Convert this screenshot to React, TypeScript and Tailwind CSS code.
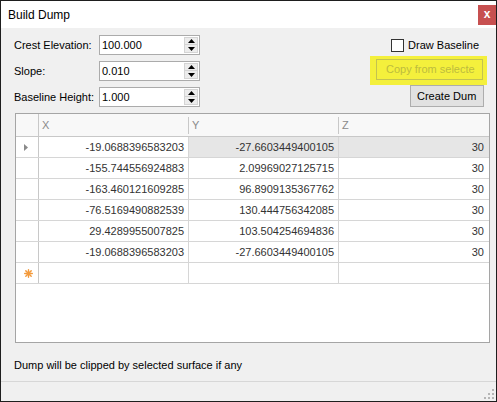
const rows = [
  { x: '-19.0688396583203', y: '-27.6603449400105', z: '30' },
  { x: '-155.744556924883', y: '2.09969027125715', z: '30' },
  { x: '-163.460121609285', y: '96.8909135367762', z: '30' },
  { x: '-76.5169490882539', y: '130.444756342085', z: '30' },
  { x: '29.4289955007825', y: '103.504254694836', z: '30' },
  { x: '-19.0688396583203', y: '-27.6603449400105', z: '30' },
];

const fields = [
  { label: 'Crest Elevation:', value: '100.000' },
  { label: 'Slope:', value: '0.010' },
  { label: 'Baseline Height:', value: '1.000' },
];

function Spinner() {
  return (
    <div className="flex flex-col py-[1px] pr-[1px]">
      <div className="flex h-[8px] w-[14px] items-center justify-center border border-[#d4d4d4] bg-[#ececec]">
        <svg width="7" height="4" viewBox="0 0 7 4">
          <path d="M3.5 0 L7 4 L0 4 Z" fill="#000" />
        </svg>
      </div>
      <div className="flex h-[8px] w-[14px] items-center justify-center border border-t-0 border-[#d4d4d4] bg-[#ececec]">
        <svg width="7" height="4" viewBox="0 0 7 4">
          <path d="M0 0 L7 0 L3.5 4 Z" fill="#000" />
        </svg>
      </div>
    </div>
  );
}

function NumberBox({ value }: { value: string }) {
  return (
    <div className="flex h-[20px] w-[101px] border border-[#ababab] bg-white leading-none">
      <div className="flex flex-1 items-center pl-[2px] text-[11px] text-black">{value}</div>
      <Spinner />
    </div>
  );
}

export default function App() {
  return (
    <div className="flex h-[402px] w-[497px] flex-col border border-[#1e1e1e] bg-[#f0f0f0] font-['Liberation_Sans',Arial,sans-serif] text-[11px] text-black">
      {/* Title bar */}
      <div className="flex h-[27px] shrink-0 items-start justify-between bg-white">
        <div className="flex h-[27px] items-center pl-[7px] text-[12px]">Build Dump</div>
        <div className="mt-[4px] flex h-[20px] w-[18px] items-center justify-center bg-[#c75050] pb-[2px] text-[12px] font-bold text-white">
          x
        </div>
      </div>

      {/* Top controls */}
      <div className="flex h-[85px] shrink-0 justify-between pl-[13px] pr-[9px]">
        <div className="mt-[7px] flex flex-col gap-[6px]">
          {fields.map((f) => (
            <div key={f.label} className="flex h-[20px] items-center leading-none">
              <div className="w-[85px]">{f.label}</div>
              <NumberBox value={f.value} />
            </div>
          ))}
        </div>

        <div className="flex flex-col items-end">
          <div className="mr-[8px] mt-[10px] flex h-[15px] items-center gap-[4px]">
            <div className="h-[13px] w-[13px] border border-[#333] bg-white" />
            <span>Draw Baseline</span>
          </div>
          <div className="mt-[3px] bg-[#f4f03c] pb-[5px] pl-[6px] pr-[4px] pt-[3px]">
            <div className="flex h-[21px] w-[107px] items-center overflow-hidden whitespace-nowrap border border-[#c4c350] pl-[9px] text-[#bdbc3e]">
              Copy from selecte
            </div>
          </div>
          <div className="mr-[3px] flex h-[22px] w-[74px] items-center overflow-hidden whitespace-nowrap border border-[#adadad] bg-[#e1e1e1] pl-[6px]">
            Create Dum
          </div>
        </div>
      </div>

      {/* Data grid */}
      <div className="ml-[14px] flex h-[230px] w-[475px] shrink-0 flex-col border border-[#a5a5a5] bg-white text-[#333]">
        <div className="grid h-[23px] grid-cols-[23px_150px_150px_150px] border-b border-[#c8c8c8] bg-[#f8f8f8] text-[#8a8a8a]">
          <div className="border-r border-[#c8c8c8]" />
          {['X', 'Y', 'Z'].map((h, i) => (
            <div key={h} className="relative flex items-center pl-[3px]">
              {i > 0 && <div className="absolute left-[-1px] top-[3px] h-[17px] w-px bg-[#c8c8c8]" />}
              {h}
            </div>
          ))}
        </div>
        {rows.map((r, i) => (
          <div key={i} className="grid h-[21px] grid-cols-[23px_150px_150px_150px] border-b border-[#d6d6d6]">
            <div className="flex items-center justify-center border-r border-[#c8c8c8] pr-[2px]">
              {i === 0 && (
                <svg width="4" height="7" viewBox="0 0 4 7">
                  <path d="M0 0 L4 3.5 L0 7 Z" fill="#8a8a8a" />
                </svg>
              )}
            </div>
            <div className="flex items-center justify-end border-r border-[#d6d6d6] pr-[4px]">{r.x}</div>
            <div className={`flex items-center justify-end border-r border-[#d6d6d6] pr-[4px] ${i === 0 ? 'bg-[#e6e6e6]' : ''}`}>
              {r.y}
            </div>
            <div className={`flex items-center justify-end pr-[5px] ${i === 0 ? 'bg-[#e6e6e6]' : ''}`}>{r.z}</div>
          </div>
        ))}
        <div className="grid h-[21px] grid-cols-[23px_150px_150px_150px] border-b border-[#d6d6d6]">
          <div className="flex items-center justify-center border-r border-[#c8c8c8] pl-[2px]">
            <svg width="9" height="9" viewBox="0 0 9 9">
              <g stroke="#f39a3c" strokeWidth="1.4" strokeLinecap="round">
                <path d="M4.5 0.7 V8.3" />
                <path d="M0.7 4.5 H8.3" />
                <path d="M1.8 1.8 L7.2 7.2" />
                <path d="M7.2 1.8 L1.8 7.2" />
              </g>
              <circle cx="4.5" cy="4.5" r="2" fill="#f39a3c" />
            </svg>
          </div>
          <div className="border-r border-[#d6d6d6]" />
          <div className="border-r border-[#d6d6d6]" />
          <div />
        </div>
      </div>

      {/* Footer note */}
      <div className="h-[38px] shrink-0 pl-[13px] pt-[14px]">Dump will be clipped by selected surface if any</div>

      {/* Status strip */}
      <div className="h-px shrink-0 bg-[#d7d7d7]" />
      <div className="flex h-[19px] shrink-0 items-end justify-end pb-[1px] pr-[1px]">
        <svg width="12" height="12" viewBox="0 0 12 12">
          <g fill="#b5b5b5">
            <rect x="9" y="1" width="2" height="2" />
            <rect x="5" y="5" width="2" height="2" />
            <rect x="9" y="5" width="2" height="2" />
            <rect x="1" y="9" width="2" height="2" />
            <rect x="5" y="9" width="2" height="2" />
            <rect x="9" y="9" width="2" height="2" />
          </g>
        </svg>
      </div>
    </div>
  );
}
